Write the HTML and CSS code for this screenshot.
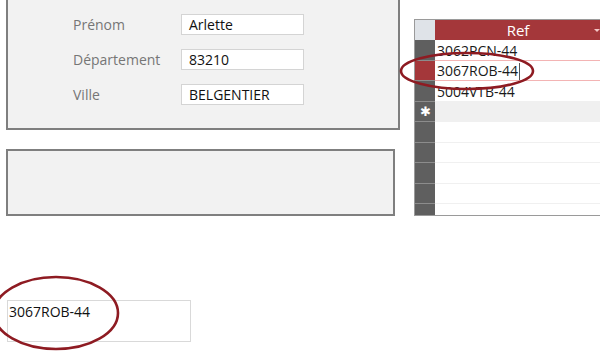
FILE: index.html
```html
<!DOCTYPE html>
<html lang="fr">

<head>
    <meta charset="UTF-8">
    <title>Formulaire et sous-formulaire</title>
    <link rel="stylesheet" href="styles.css">
</head>

<body>
    <div class="page">
        <div class="left_col">
            <!-- fiche client -->
            <div class="panel fiche">
                <div class="field">
                    <label></label>
                    <span class="box"></span>
                </div>
                <div class="field">
                    <label>Prénom</label>
                    <span class="box">Arlette</span>
                </div>
                <div class="field">
                    <label>Département</label>
                    <span class="box">83210</span>
                </div>
                <div class="field">
                    <label>Ville</label>
                    <span class="box">BELGENTIER</span>
                </div>
            </div>
            <div class="panel vide"></div>
            <div class="result">3067ROB-44</div>
        </div>
        <!-- feuille de données -->
        <div class="sheet">
            <div class="row head">
                <span class="sel corner"></span>
                <span class="cell">Ref<i class="arrow"></i></span>
            </div>
            <div class="row">
                <span class="sel"></span>
                <span class="cell">3062PCN-44</span>
            </div>
            <div class="row current">
                <span class="sel"></span>
                <span class="cell">3067ROB-44<i class="caret"></i></span>
            </div>
            <div class="row">
                <span class="sel"></span>
                <span class="cell">5004VTB-44</span>
            </div>
            <div class="row new">
                <span class="sel">&#10033;</span>
                <span class="cell"></span>
            </div>
            <div class="row empty"><span class="sel"></span><span class="cell"></span></div>
            <div class="row empty"><span class="sel"></span><span class="cell"></span></div>
            <div class="row empty"><span class="sel"></span><span class="cell"></span></div>
            <div class="row empty"><span class="sel"></span><span class="cell"></span></div>
            <div class="row empty last"><span class="sel"></span><span class="cell"></span></div>
        </div>
    </div>
    <!-- annotations -->
    <svg class="marks" width="600" height="360" viewBox="0 0 600 360">
        <ellipse cx="467" cy="71" rx="66" ry="18" />
        <ellipse cx="56" cy="313" rx="62" ry="36" />
    </svg>
</body>

</html>
```

FILE: styles.css
```css
html,body {
    margin: 0;
    padding: 0;
}
body {
    width: 600px;
    height: 360px;
    overflow: hidden;
    position: relative;
    background-color: #ffffff;
    font-family: 'Open Sans', 'Noto Sans', sans-serif;
    font-size: 14px;
    color: #1a1a1a;
}
.page {
    display: flex;
    align-items: flex-start;
    padding-left: 6px;
}
.left_col {
    flex: none;
    width: 394px;
    display: flex;
    flex-direction: column;
}
.panel {
    background-color: #f2f2f2;
    border: 2px solid #7f7f7f;
    box-sizing: border-box;
}
.fiche {
    margin-top: -38px;
    padding: 15px 0 23px 65px;
    display: flex;
    flex-direction: column;
    gap: 14px;
}
.field {
    display: flex;
    align-items: center;
    height: 21px;
}
.field label {
    width: 108px;
    color: #767676;
    font-size: 14px;
}
.box {
    box-sizing: border-box;
    width: 123px;
    height: 21px;
    line-height: 19px;
    padding-left: 7px;
    background-color: #ffffff;
    border: 1px solid #d4d4d4;
    color: #111111;
}
.vide {
    margin-top: 19px;
    width: 389px;
    height: 67px;
}
.result {
    box-sizing: border-box;
    margin-top: 84px;
    margin-left: 1px;
    width: 184px;
    height: 42px;
    padding: 1px 0 0 1px;
    line-height: 20px;
    border: 1px solid #d9d9d9;
    color: #111111;
}
.sheet {
    flex: none;
    margin-left: 14px;
    margin-top: 19px;
    width: 200px;
    height: 197px;
    box-sizing: border-box;
    border: 1px solid #9a9a9a;
    border-right: none;
    overflow: hidden;
    background-color: #ffffff;
}
.row {
    display: flex;
    height: 20.5px;
}
.row.head {
    height: 20px;
}
.sel {
    box-sizing: border-box;
    width: 20px;
    flex: none;
    background-color: #5f5f5f;
    border-bottom: 1px solid #8c8c8c;
    color: #ffffff;
    font-size: 13px;
    text-align: center;
    line-height: 19px;
}
.sel.corner {
    background-color: #dfe3e8;
    border-bottom: none;
}
.row.last .sel {
    border-bottom: none;
}
.cell {
    box-sizing: border-box;
    width: 166px;
    flex: none;
    padding-left: 2px;
    line-height: 21px;
    border-bottom: 1px solid #f0f0f0;
    position: relative;
}
.head .cell {
    background-color: #a4373a;
    color: #ffffff;
    font-size: 15px;
    text-align: center;
    line-height: 20px;
    border-bottom: none;
    padding-left: 0;
}
.arrow {
    position: absolute;
    right: 1px;
    top: 9px;
    border-left: 3px solid transparent;
    border-right: 3px solid transparent;
    border-top: 3px solid #f4c6c6;
}
.current .sel {
    background-color: #a4373a;
}
.current .cell {
    border-top: 1px solid #f3b4b4;
    border-bottom: 1px solid #f3b4b4;
    margin-top: -1px;
    height: 21.5px;
    line-height: 19px;
}
.caret {
    display: inline-block;
    width: 1px;
    height: 17px;
    margin-left: 1px;
    vertical-align: middle;
    background-color: #555555;
}
.new .cell {
    background-color: #f0f0f0;
}
.marks {
    position: absolute;
    left: 0;
    top: 0;
    pointer-events: none;
}
.marks ellipse {
    fill: none;
    stroke: #8e1b22;
    stroke-width: 2.6;
}
```
